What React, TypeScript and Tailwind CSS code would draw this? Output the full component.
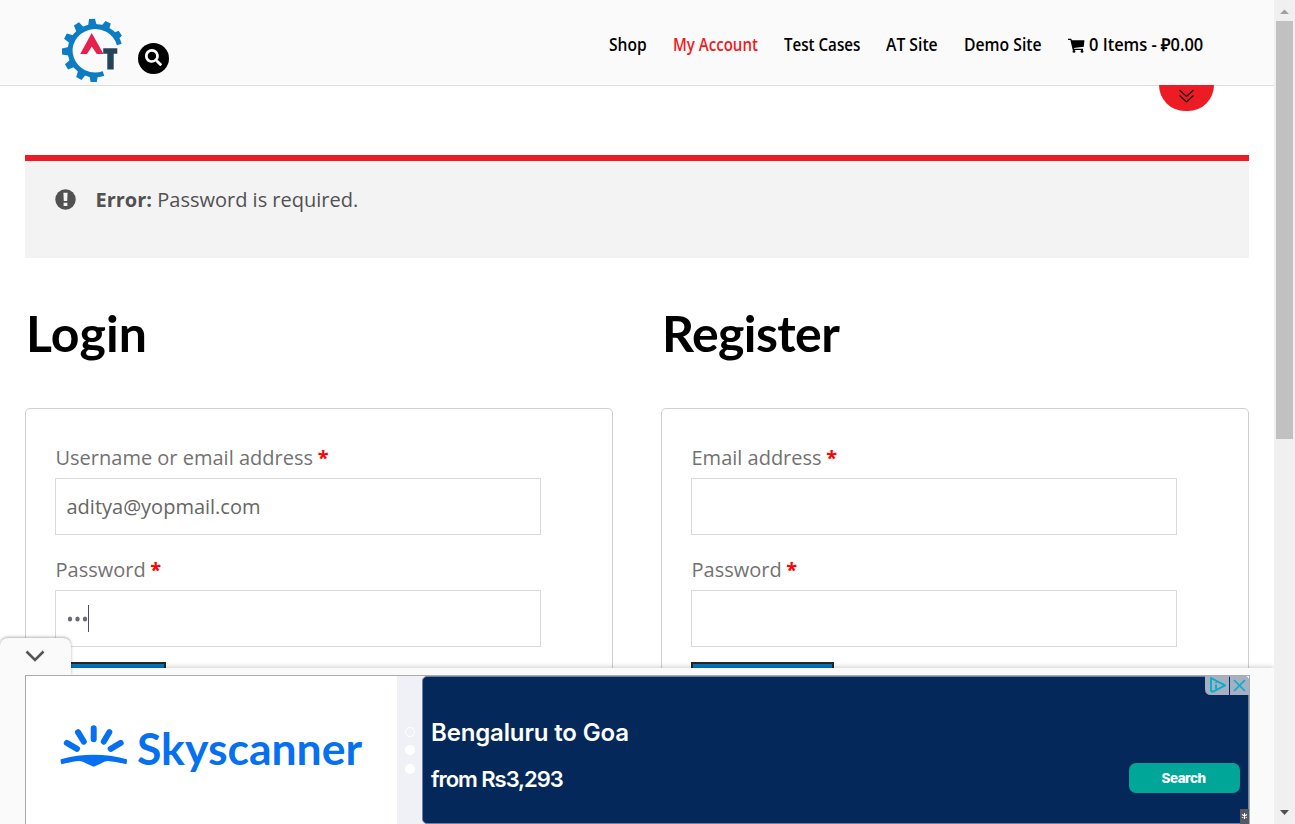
import type { ReactNode } from "react";
import { FaSearch } from "react-icons/fa";

const TEETH = [-153, -123, -93, -63, -33, 90, 118, 149, 178];

function GearLogo() {
  return (
    <svg className="h-16 w-16 shrink-0" viewBox="61 17.5 64 64" aria-label="AT">
      <path d="M119.3 44 A25 24.2 0 1 0 103.5 73" fill="none" stroke="#0a7dc4" strokeWidth="5" />
      {TEETH.map((a) => (
        <path key={a} d="M117.5 45.5 L125.4 47 V53 L117.5 54.5 Z" fill="#0a7dc4" transform={`rotate(${a} 93.7 50)`} />
      ))}
      <path d="M91.7 32.5 L103.5 53.6 H96.8 L91.8 46 L87 53.6 H80.2 Z" fill="#e4204e" />
      <path d="M103.2 47.7 H117.3 V53.2 H113.7 V69 H107.3 V53.2 H103.2 Z" fill="#24445c" />
    </svg>
  );
}

function CartIcon() {
  return (
    <svg className="mr-1 h-[15px] w-[17px] shrink-0" viewBox="0 0 17 15" fill="currentColor">
      <path d="M0 .8H3.3L3.8 2.2H16.4L15.8 8.7L5.8 10L6 10.8H15V12H4.7L2.4 2H0Z" />
      <circle cx="6" cy="13.4" r="1.4" />
      <circle cx="14" cy="13.4" r="1.4" />
    </svg>
  );
}

function NavItem({ width, scale, active, icon, children }: { width: string; scale: string; active?: boolean; icon?: ReactNode; children: ReactNode }) {
  return (
    <a className={`flex items-center whitespace-nowrap ${width} ${active ? "text-[#ed1c24]" : "text-black"}`}>
      {icon}
      <span className={`origin-left ${scale}`}>{children}</span>
    </a>
  );
}

function Header() {
  return (
    <header className="flex h-[86px] shrink-0 items-start border-b border-[#dedede] bg-[#fafafa] pl-[61px]">
      <div className="flex w-[548px] pt-[18px]">
        <GearLogo />
        <span className="mt-[25px] ml-[13px] flex h-[31px] w-[31px] items-center justify-center rounded-full bg-black pb-[2px] text-white">
          <FaSearch size={17} />
        </span>
      </div>
      <nav className="flex gap-[26px] pt-8 font-['Open_Sans',sans-serif] text-[17.3px] leading-[26px] font-semibold">
        <NavItem width="w-[38px]" scale="scale-x-[0.9]">Shop</NavItem>
        <NavItem width="w-[85px]" scale="scale-x-[0.87]" active>My Account</NavItem>
        <NavItem width="w-[76px]" scale="scale-x-[0.875]">Test Cases</NavItem>
        <NavItem width="w-[52px]" scale="scale-x-[0.91]">AT Site</NavItem>
        <NavItem width="w-[78px]" scale="scale-x-[0.91]">Demo Site</NavItem>
        <NavItem width="w-[136px]" scale="scale-x-[0.95]" icon={<CartIcon />}>0 Items - ₽0.00</NavItem>
      </nav>
    </header>
  );
}

function Field({ label, value, focused }: { label: string; value?: string; focused?: boolean }) {
  return (
    <div className="mb-5">
      <label className="block h-[34px] pl-[0.5px] text-[20px] leading-[30px] text-[#727272]">
        {label} <b className="-ml-[0.5px] text-[#f00]">*</b>
      </label>
      <div className="mt-[1px] flex h-[57px] w-[486px] items-center border border-[#d9d9d9] bg-white pl-[10.5px] text-[20px] text-[#666]">
        {value}
        {focused && (
          <>
            <svg className="h-6 w-[21px]" viewBox="0 0 21 24" fill="#6a6a78">
              <ellipse cx="3" cy="12" rx="2.2" ry="2.6" />
              <ellipse cx="10.5" cy="12" rx="2.2" ry="2.6" />
              <ellipse cx="18" cy="12" rx="2.2" ry="2.6" />
            </svg>
            <span className="h-[27px] w-px bg-[#4b4b68]" />
          </>
        )}
      </div>
    </div>
  );
}

function FormColumn({ title, titleClass, buttonClass, children }: { title: string; titleClass: string; buttonClass: string; children: ReactNode }) {
  return (
    <section className="w-[588px]">
      <h2 className={`h-[90px] pl-px font-['Lato',sans-serif] text-[50px] leading-[68px] font-bold whitespace-nowrap text-black ${titleClass}`}>{title}</h2>
      <div className="mt-[19px] h-[400px] rounded-[5px] border border-[#d0d0d0] pt-[34px] pl-[29px]">
        {children}
        <div className={`-mt-[5px] h-[50px] border-2 border-[#262626] bg-[#0278bf] ${buttonClass}`} />
      </div>
    </section>
  );
}

function SkyscannerLogo() {
  return (
    <div className="flex h-full w-[371px] items-start bg-white pl-[34px]">
      <svg className="mt-[47px] h-[46px] w-[70px] shrink-0" viewBox="60 723 70 46">
        <g stroke="#0770f0" strokeWidth="6" strokeLinecap="round">
          <path d="M93.7 728.2V739.2M78 732.2L83.8 741.6M66.8 742.9L77 748.8M109.3 732.2L103.8 741.6M120.7 742.9L110.7 748.8" />
        </g>
        <path d="M60.7 759.2 Q93.7 750.5 126.8 759.2 Q127.4 761.5 126.2 764.3 Q115.5 761.4 107.5 760.9 Q104 761 101 763.5 L95.5 766 Q93.7 767 92 766 L86.3 763.5 Q83 761 79.5 760.9 Q72 761.4 61.5 764.3 Q60.3 761.5 60.7 759.2Z" fill="#0770f0" />
      </svg>
      <span className="mt-[40px] ml-[7px] font-['Lato',sans-serif] text-[44.5px] leading-[64px] font-bold text-[#0770f0]">Skyscanner</span>
    </div>
  );
}

function AdBanner() {
  return (
    <aside className="relative h-[156px] shrink-0 bg-[#fafafa] pt-[7px] pl-[25px] shadow-[0_-1px_5px_rgba(0,0,0,0.2)]">
      <button className="absolute -top-[30px] left-0 flex h-[37px] w-[71px] items-center justify-center rounded-t-lg bg-[#fafafa] pb-[2px] shadow-[0_-1px_3px_rgba(0,0,0,0.3)] [clip-path:inset(-5px_-5px_0px_0px)]">
        <svg className="mr-[1px] h-3 w-5" viewBox="0 0 20 12" fill="none" stroke="#555" strokeWidth="2.6">
          <path d="M1.5 1.5L10 10L18.5 1.5" />
        </svg>
      </button>
      <div className="relative flex h-[149px] w-[1225px] border-x border-t border-[#aaa] bg-[#f0f1f7]">
        <SkyscannerLogo />
        <div className="flex w-[25px] flex-col items-center gap-[9px] pt-[51px]">
          <i className="h-[10px] w-[10px] rounded-full border border-white" />
          <i className="-mt-px h-[10px] w-[10px] rounded-full bg-white" />
          <i className="h-[10px] w-[10px] rounded-full bg-white" />
        </div>
        <div className="flex flex-1 justify-between rounded-[5px] border border-[#7080a0] bg-[#05285a] text-white">
          <div className="pt-[36px] pl-2 font-['Inter',sans-serif] text-[24px] font-semibold">
            <p className="h-[46px] leading-[40px] tracking-[-0.15px]">Bengaluru to Goa</p>
            <p className="text-[22px] leading-[40px] tracking-[-1.05px]">from Rs3,293</p>
          </div>
          <button className="mt-[86px] mr-[8px] h-[30px] w-[111px] rounded-[7px] bg-[#00a698] pr-[2px] font-['Inter',sans-serif] text-[13.5px] font-extrabold tracking-[-0.5px]">Search</button>
        </div>
        <svg className="absolute top-0 right-0 h-[19px] w-[44px]" viewBox="0 0 44 19" fill="none">
          <path d="M0 0H24V19H6Q0 19 0 13Z" fill="#a6b0c3" />
          <path d="M25 0H39Q44 0 44 5V19H25Z" fill="#a6b0c3" />
          <path d="M6 15.5V2L20 9.4L8.5 15.5M6 15.5H9" stroke="#00aecd" strokeWidth="1.8" strokeLinejoin="round" />
          <path d="M11 6V7M11 8.5V13" stroke="#00aecd" strokeWidth="1.8" />
          <path d="M29 4L40 15M40 4L29 15" stroke="#00aecd" strokeWidth="1.6" />
        </svg>
        <svg className="absolute right-0 bottom-0 h-[15px] w-[9px] bg-[#555963]" viewBox="0 0 9 15" stroke="white" strokeWidth="1.1">
          <path d="M4.5 4V10M2 5.5L7 8.5M7 5.5L2 8.5" />
        </svg>
      </div>
    </aside>
  );
}

function Scrollbar() {
  return (
    <div className="flex w-[21px] shrink-0 flex-col items-center justify-between bg-[#f0f0f0]">
      <div className="flex flex-col items-center">
        <svg className="h-[21px] w-[17px]" viewBox="0 0 17 21"><path d="M4 14H13L8.5 9.5Z" fill="#a0a0a0" /></svg>
        <div className="h-[418px] w-[17px] bg-[#c1c1c1]" />
      </div>
      <svg className="h-[21px] w-[17px]" viewBox="0 0 17 21"><path d="M4 7H13L8.5 12Z" fill="#505050" /></svg>
    </div>
  );
}

export default function App() {
  return (
    <div className="flex h-[824px] w-full overflow-hidden bg-white font-['Open_Sans',sans-serif]">
      <div className="flex w-[1274px] flex-col overflow-hidden">
        <div className="relative h-[668px] shrink-0 overflow-hidden">
          <Header />
          <div className="absolute top-[85px] left-[1159px] flex h-[26px] w-[55px] justify-center rounded-b-[28px] bg-[#ed1c24] pt-1">
            <svg className="h-[15px] w-[17px]" viewBox="0 0 17 15" fill="none" stroke="#111" strokeWidth="1.2">
              <path d="M1.5 1L8.5 7.5L15.5 1M1.5 6.5L8.5 13L15.5 6.5" />
            </svg>
          </div>
          <main className="px-[25px] pt-[69px]">
            <div className="flex h-[103px] border-t-[6px] border-[#ed1c24] bg-[#f3f3f3] pt-[22px] pl-[30px] text-[20px] leading-[34px] text-[#515151]">
              <svg className="mt-[6px] mr-[19.5px] h-[21px] w-[21px]" viewBox="0 0 21 21">
                <circle cx="10.5" cy="10.5" r="10.2" fill="#515151" />
                <path d="M8.4 3.7H12.6L12.2 12H8.8ZM8.6 13.7H12.4V17H8.6Z" fill="#f3f3f3" />
              </svg>
              <p><b>Error:</b> Password is required.</p>
            </div>
            <div className="mt-[41px] flex gap-12">
              <FormColumn title="Login" titleClass="tracking-[0.1px]" buttonClass="w-[111px]">
                <Field label="Username or email address" value="aditya@yopmail.com" />
                <Field label="Password" focused />
              </FormColumn>
              <FormColumn title="Register" titleClass="tracking-[-0.6px]" buttonClass="w-[143px]">
                <Field label="Email address" />
                <Field label="Password" />
              </FormColumn>
            </div>
          </main>
        </div>
        <AdBanner />
      </div>
      <Scrollbar />
    </div>
  );
}
